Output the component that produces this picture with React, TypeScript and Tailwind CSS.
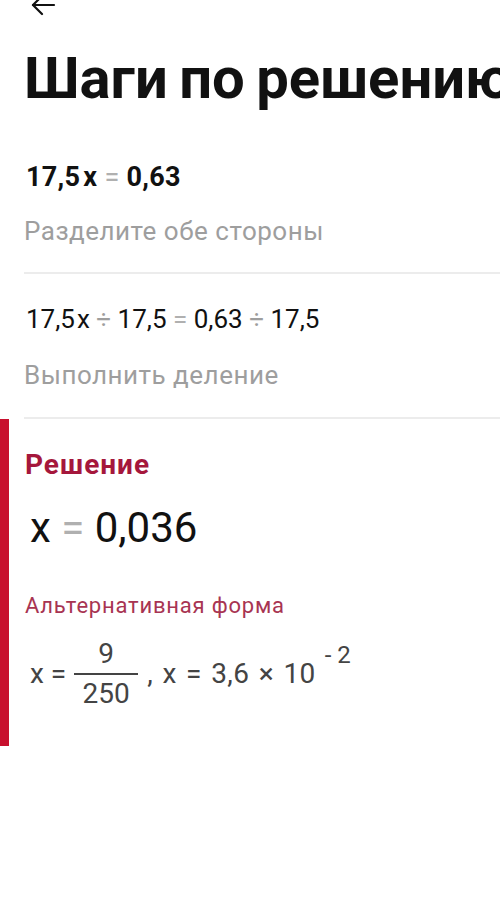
export default function App() {
  return (
    <div className="w-[500px] h-[920px] bg-white overflow-hidden font-['Roboto',sans-serif] text-[#111]">
      <div className="h-[18px] pl-[29px] overflow-hidden">
        <svg width="28" height="28" viewBox="0 0 28 28" className="-mt-[9px]" fill="none" stroke="#111" strokeWidth="2.2" strokeLinecap="round" strokeLinejoin="round">
          <path d="M25 14H4" />
          <path d="M13 5L4 14l9 9" />
        </svg>
      </div>
      <h1 className="mt-[31px] pl-6 text-[58px] leading-[58px] font-bold whitespace-nowrap [word-spacing:-3px]">
        Шаги по решению
      </h1>

      <div className="mt-[55px] pl-[26px]">
        <div className="text-[27px] leading-[30px] font-bold tracking-[0.3px]">
          17,5<span className="ml-[3px]">x</span> <span className="text-[#b0b0b0] font-normal">=</span> 0,63
        </div>
        <div className="mt-[24px] -ml-[2px] text-[26px] leading-[30px] text-[#9e9e9e] tracking-[0.5px]">Разделите обе стороны</div>
      </div>
      <div className="mt-[26px] ml-6 h-[2px] bg-[#ececec]" />

      <div className="pl-[26px]">
        <div className="mt-[30px] text-[26px] leading-[30px]">
          17,5<span className="ml-[2px]">x</span> <span className="text-[#9e9e9e]">÷</span> 17,5 <span className="text-[#b0b0b0]">=</span> 0,63 <span className="text-[#9e9e9e]">÷</span> 17,5
        </div>
        <div className="mt-[26px] -ml-[2px] text-[26px] leading-[30px] text-[#9e9e9e] tracking-[0.5px]">Выполнить деление</div>
      </div>
      <div className="mt-[27px] ml-6 h-[2px] bg-[#ececec]" />

      <div className="flex h-[327px]">
        <div className="w-[9px] bg-[#c8102e]" />
        <div className="pl-4 pt-[31px]">
          <div className="text-[28px] leading-[30px] font-bold text-[#a5173c] tracking-[1px]">Решение</div>
          <div className="mt-[25px] pl-[5px] text-[42px] leading-[46px]">
            x <span className="text-[#b0b0b0]">=</span> 0,036
          </div>
          <div className="mt-[43px] text-[22px] leading-[24px] text-[#a83452] tracking-[0.8px]">Альтернативная форма</div>
          <div className="mt-[22px] pl-[5px] flex items-center text-[28px] text-[#444]">
            <span>x =</span>
            <span className="ml-[8px] flex flex-col items-center">
              <span className="leading-[28px]">9</span>
              <span className="my-[5px] w-[64px] h-[2px] bg-[#444]" />
              <span className="leading-[28px]">250</span>
            </span>
            <span className="ml-[9px] tracking-[0.4px] [word-spacing:2px]">, x = 3,6 × 10</span>
            <span className="ml-[9px] -mt-[38px] text-[24px]">-&nbsp;2</span>
          </div>
        </div>
      </div>
    </div>
  )
}
